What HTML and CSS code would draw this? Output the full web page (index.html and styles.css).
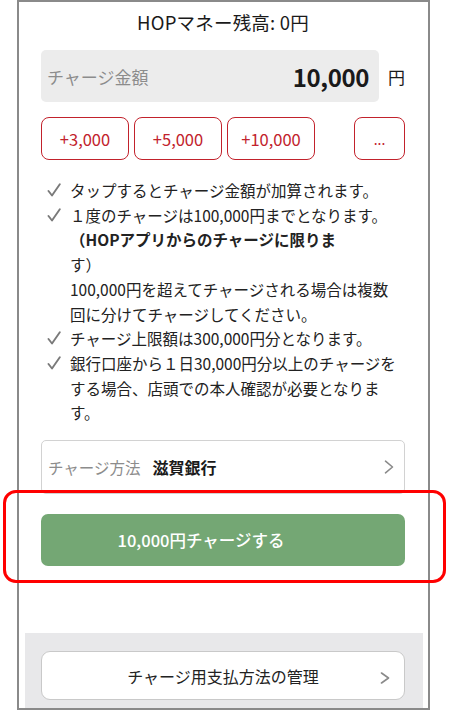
FILE: index.html
```html
<!DOCTYPE html>
<html lang="ja">
<head>
    <meta charset="UTF-8">
    <title>HOPマネー チャージ</title>
    <meta name="viewport" content="width=device-width, initial-scale=1.0">
    <link rel="stylesheet" href="styles.css">
</head>
<body>
    <div class="phone">
        <div class="charge-main">
            <h1 class="balance">HOPマネー残高: 0円</h1>

            <!-- 金額入力 -->
            <div class="amount-row">
                <div class="amount-box">
                    <span class="amount-label">チャージ金額</span>
                    <span class="amount-value">10,000</span>
                </div>
                <span class="amount-unit">円</span>
            </div>

            <div class="add-buttons">
                <button class="add-btn">+3,000</button>
                <button class="add-btn">+5,000</button>
                <button class="add-btn">+10,000</button>
                <button class="add-btn more">...</button>
            </div>

            <ul class="notes">
                <li>
                    <svg class="check" viewBox="0 0 14 14"><path d="M1.5 8 L5 12.5 L12.8 1.2"/></svg>
                    <span>タップするとチャージ金額が加算されます。</span>
                </li>
                <li>
                    <svg class="check" viewBox="0 0 14 14"><path d="M1.5 8 L5 12.5 L12.8 1.2"/></svg>
                    <span>１度のチャージは100,000円までとなります。<br>
                        <strong>（HOPアプリからのチャージに限りま</strong><br>
                        す）<br>
                        100,000円を超えてチャージされる場合は複数<br>
                        回に分けてチャージしてください。</span>
                </li>
                <li>
                    <svg class="check" viewBox="0 0 14 14"><path d="M1.5 8 L5 12.5 L12.8 1.2"/></svg>
                    <span>チャージ上限額は300,000円分となります。</span>
                </li>
                <li>
                    <svg class="check" viewBox="0 0 14 14"><path d="M1.5 8 L5 12.5 L12.8 1.2"/></svg>
                    <span>銀行口座から１日30,000円分以上のチャージを<br>
                        する場合、店頭での本人確認が必要となりま<br>
                        す。</span>
                </li>
            </ul>

            <!-- チャージ方法 -->
            <div class="method-box">
                <span class="method-label">チャージ方法</span>
                <span class="method-bank">滋賀銀行</span>
                <svg class="chevron" viewBox="0 0 10 14"><path d="M1.5 1.2 L8.5 7 L1.5 12.8"/></svg>
            </div>

            <button class="charge-btn">10,000円チャージする</button>
        </div>

        <div class="manage-area">
            <button class="manage-btn">
                チャージ用支払方法の管理
                <svg class="chevron small" viewBox="0 0 10 12"><path d="M1.5 1 L8.5 6 L1.5 11"/></svg>
            </button>
        </div>
    </div>

    <!-- 注釈の赤枠 -->
    <div class="highlight"></div>
</body>
</html>
```

FILE: styles.css
```css
:root {
    --frame: #8a8a8a;
    --text: #1a1a1a;
    --muted: #8c8c8c;
    --red: #c2222c;
    --green: #74a774;
    --line: #d2d2d2;
}

body {
    margin: 0;
    background: #fff;
    font-family: "Noto Sans CJK JP", "Noto Sans", sans-serif;
    color: var(--text);
}

.phone {
    width: 413px;
    height: 710px;
    margin-left: 17px;
    border: 2px solid var(--frame);
    box-sizing: border-box;
    display: flex;
    flex-direction: column;
}

.charge-main {
    padding: 5px 23px 0 22px;
}

.balance {
    margin: 0;
    font-size: 18.5px;
    font-weight: 400;
    line-height: 30px;
    text-align: center;
    letter-spacing: 0.2px;
}

.amount-row {
    display: flex;
    align-items: center;
    margin-top: 13px;
}
.amount-box {
    flex: 1;
    height: 52px;
    background: #ececec;
    border-radius: 5px;
    display: flex;
    align-items: center;
    justify-content: space-between;
    padding: 0 10px 0 6px;
}
.amount-label {
    color: var(--muted);
    font-size: 17px;
}
.amount-value {
    font-size: 24px;
    font-weight: 700;
    letter-spacing: -0.4px;
}
.amount-unit {
    margin-left: 9px;
    font-size: 17px;
}

.add-buttons {
    display: flex;
    gap: 5px;
    margin-top: 15px;
}
.add-btn {
    width: 88px;
    height: 43px;
    border: 1.5px solid var(--red);
    border-radius: 8px;
    background: #fff;
    color: var(--red);
    font-family: inherit;
    font-size: 16.5px;
    padding: 0;
}
.add-btn.more {
    width: 51px;
    margin-left: auto;
    font-size: 14px;
}

.notes {
    list-style: none;
    margin: 18px 0 0;
    padding: 0;
    font-size: 15.5px;
    line-height: 24.7px;
    color: #222;
}
.notes li {
    display: flex;
    align-items: flex-start;
}
.check {
    flex: none;
    width: 14px;
    height: 14px;
    margin: 5px 9px 0 6px;
    fill: none;
    stroke: #7a7a7a;
    stroke-width: 1.9;
    stroke-linecap: round;
    stroke-linejoin: round;
}
.notes strong {
    font-weight: 700;
}

.method-box {
    margin-top: 15px;
    height: 54px;
    border: 1px solid var(--line);
    border-radius: 5px;
    box-sizing: border-box;
    display: flex;
    align-items: center;
    padding: 0 10px 0 6px;
}
.method-label {
    color: var(--muted);
    font-size: 15.5px;
}
.method-bank {
    margin-left: 12px;
    font-size: 16px;
    font-weight: 700;
}
.chevron {
    width: 10px;
    height: 14px;
    margin-left: auto;
    fill: none;
    stroke: #8a8a8a;
    stroke-width: 1.6;
    stroke-linecap: round;
    stroke-linejoin: round;
}

.charge-btn {
    display: block;
    width: 100%;
    height: 52px;
    margin-top: 20px;
    padding: 0 44px 0 0;
    border: none;
    border-radius: 7px;
    background: var(--green);
    color: #fff;
    font-family: inherit;
    font-size: 16.5px;
    font-weight: 500;
}

.manage-area {
    margin: auto 5px 0 6px;
    height: 75px;
    box-sizing: border-box;
    background: #e8e8ea;
    padding: 18px 18px 8px 16px;
}
.manage-btn {
    position: relative;
    width: 100%;
    height: 49px;
    border: 1px solid #c9c9c9;
    border-radius: 9px;
    background: #fff;
    color: #222;
    font-family: inherit;
    font-size: 16px;
}
.chevron.small {
    position: absolute;
    right: 14px;
    top: 20px;
    width: 10px;
    height: 12px;
}

.highlight {
    position: absolute;
    left: 3px;
    top: 490px;
    width: 443px;
    height: 93px;
    border: 3.5px solid #ff0000;
    border-radius: 13px;
    box-sizing: border-box;
    pointer-events: none;
}
```
